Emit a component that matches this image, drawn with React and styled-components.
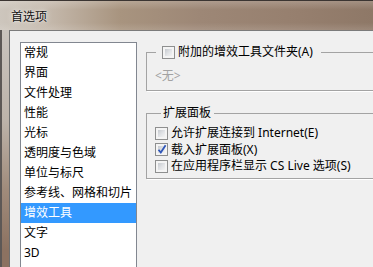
import React from "react";
import styled, { createGlobalStyle } from "styled-components";

const categories = [
  "常规",
  "界面",
  "文件处理",
  "性能",
  "光标",
  "透明度与色域",
  "单位与标尺",
  "参考线、网格和切片",
  "增效工具",
  "文字",
  "3D",
];

const GlobalStyle = createGlobalStyle`
  html, body {
    margin: 0;
    padding: 0;
    overflow: hidden;
    background: #8c7362;
  }
  body {
    font-family: "Noto Sans", "Noto Sans CJK SC", sans-serif;
    font-size: 12px;
    color: #000;
  }
`;

const Window = styled.div`
  width: 373px;
  height: 267px;
  overflow: hidden;
`;

const TitleBar = styled.div`
  height: 30px;
  box-sizing: border-box;
  display: flex;
  align-items: center;
  padding: 2px 0 0 11px;
  border-top: 1px solid #3b3532;
  background:
    linear-gradient(180deg, rgba(255, 255, 255, 0.18) 0%, rgba(255, 255, 255, 0) 30%, rgba(255, 255, 255, 0) 75%, rgba(255, 255, 255, 0.12) 100%),
    linear-gradient(90deg, #cdc6bd 0px, #c4b8ab 50px, #a8947f 120px, #9d8776 200px, #967f6e 300px, #8e7867 373px);
`;

const Title = styled.span`
  font-size: 12px;
  line-height: 16px;
  color: #111;
  text-shadow: 0 0 6px rgba(255, 255, 255, 0.9), 0 0 2px rgba(255, 255, 255, 0.8);
`;

const Frame = styled.div`
  height: 237px;
  padding-left: 9px;
  background: linear-gradient(180deg, #c9c3bd 0px, #bdb3aa 90px, #a08b7b 160px, #8c7261 220px);
  box-shadow: inset 2px 0 0 #5d5856;
`;

const Client = styled.div`
  width: 420px;
  height: 237px;
  box-sizing: border-box;
  display: grid;
  grid-template-columns: 117px 300px;
  column-gap: 9px;
  align-items: start;
  padding: 11px 0 0 10px;
  background: #f0f0f0;
  border-left: 1px solid #6f6f6f;
  border-top: 1px solid #7b7b7b;
`;

const ListBox = styled.ul`
  list-style: none;
  margin: 0;
  padding: 0;
  height: 260px;
  background: #fff;
  border: 1px solid #828790;
`;

const ListItem = styled.li`
  height: 20px;
  line-height: 20px;
  padding-left: 3px;
  white-space: nowrap;
  background: ${(p) => (p.$selected ? "#3399ff" : "transparent")};
  color: ${(p) => (p.$selected ? "#fff" : "#000")};
`;

const Options = styled.div`
  margin-top: 2px;
  display: grid;
  row-gap: 14px;
`;

const GroupBox = styled.fieldset`
  margin: 0;
  width: 300px;
  box-sizing: border-box;
  min-width: 0;
  padding: ${(p) => p.$pad};
  border: 1px solid #a3a3a3;
  box-shadow: 1px 1px 0 #fff;
`;

const Legend = styled.legend`
  margin-left: ${(p) => p.$offset}px;
  padding: ${(p) => p.$pad};
  line-height: 16px;
  height: 16px;
  display: flex;
  align-items: center;
  gap: 2px;
  white-space: nowrap;
`;

const Placeholder = styled.div`
  line-height: 16px;
  color: #a2a2a2;
`;

const Row = styled.label`
  display: flex;
  align-items: center;
  gap: 2px;
  height: 16.5px;
  line-height: 16px;
  white-space: nowrap;
`;

const Box = styled.span`
  position: relative;
  width: 13px;
  height: 13px;
  box-sizing: border-box;
  flex-shrink: 0;
  border: 1px solid #8e8f8f;
  background: #f4f4f4;
  margin-right: 1px;

  &::before {
    content: "";
    position: absolute;
    inset: 2px;
    background: linear-gradient(135deg, #c6cacf 0%, #e2e4e7 55%, #f3f3f3 100%);
  }

  svg {
    position: absolute;
    left: 1px;
    top: 0px;
  }
`;

function Checkbox({ checked }) {
  return (
    <Box>
      {checked && (
        <svg width="10" height="11" viewBox="0 0 10 11">
          <path d="M1.5 5.8 L3.8 8.6 L8.6 1.2" fill="none" stroke="#2f56b8" strokeWidth="1.8" />
        </svg>
      )}
    </Box>
  );
}

export default function App() {
  return (
    <>
      <GlobalStyle />
      <Window>
        <TitleBar>
          <Title>首选项</Title>
        </TitleBar>
        <Frame>
          <Client>
            <ListBox>
              {categories.map((c) => (
                <ListItem key={c} $selected={c === "增效工具"}>
                  {c}
                </ListItem>
              ))}
            </ListBox>
            <Options>
              <GroupBox $pad="8px 8px 6px 8px">
                <Legend $offset={1} $pad="0 8px 0 6px">
                  <Checkbox />
                  <span>附加的增效工具文件夹(A)</span>
                </Legend>
                <Placeholder>&lt;无&gt;</Placeholder>
              </GroupBox>
              <GroupBox $pad="4px 8px 3px 8px">
                <Legend $offset={6} $pad="0 3px 0 2px">
                  扩展面板
                </Legend>
                <Row>
                  <Checkbox />
                  允许扩展连接到 Internet(E)
                </Row>
                <Row>
                  <Checkbox checked />
                  载入扩展面板(X)
                </Row>
                <Row>
                  <Checkbox />
                  在应用程序栏显示 CS Live 选项(S)
                </Row>
              </GroupBox>
            </Options>
          </Client>
        </Frame>
      </Window>
    </>
  );
}
